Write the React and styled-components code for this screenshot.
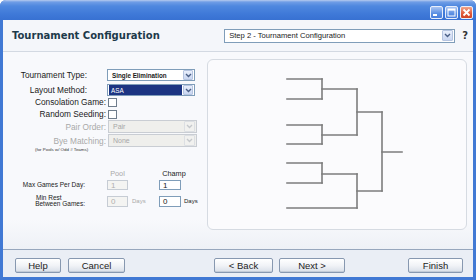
import React from "react";
import styled, { createGlobalStyle } from "styled-components";

const GlobalStyle = createGlobalStyle`
  html, body {
    margin: 0;
    padding: 0;
    background: #ffffff;
  }
  body {
    font-family: "Liberation Sans", Arial, sans-serif;
  }
`;

const Window = styled.div`
  width: 476px;
  height: 280px;
  display: flex;
  flex-direction: column;
  border-radius: 6px 6px 0 0;
  overflow: hidden;
  background: #3f76d2;
`;

const TitleBar = styled.div`
  height: 20px;
  flex: none;
  display: flex;
  justify-content: flex-end;
  align-items: flex-end;
  padding: 0 3px 1px 0;
  box-sizing: border-box;
  background: linear-gradient(
    #b7cbef 0px,
    #6f9de6 2px,
    #4f88df 6px,
    #3f79d8 14px,
    #3871d2 20px
  );
`;

const WinButtons = styled.div`
  display: flex;
  gap: 2px;
`;

const WinBtn = styled.div`
  width: 13px;
  height: 13px;
  box-sizing: border-box;
  border: 1px solid #e8eefb;
  border-radius: 2px;
  display: flex;
  align-items: center;
  justify-content: center;
  background: ${(p) =>
    p.$close
      ? "linear-gradient(#f0a58a, #e0583a 60%, #cf4426)"
      : "linear-gradient(#a9c4f2, #5b8fe3 60%, #4a7fdc)"};
`;

const Frame = styled.div`
  flex: 1;
  display: flex;
  flex-direction: column;
  border: 3px solid #4179d4;
  border-top: none;
  background: #f8f9fc;
  min-height: 0;
`;

const Header = styled.div`
  height: 31px;
  flex: none;
  display: flex;
  align-items: center;
  padding: 0 5px 0 9px;
  background: #f4f6fa;
  border-bottom: 1px solid #d3d9e2;
`;

const Title = styled.h1`
  margin: 0;
  font-family: "DejaVu Sans", Verdana, sans-serif;
  font-size: 10px;
  font-weight: bold;
  color: #1d3a4a;
  letter-spacing: 0;
`;

const Combo = styled.div`
  margin-left: ${(p) => p.$ml || 0}px;
  width: ${(p) => p.$w}px;
  height: ${(p) => p.$h}px;
  box-sizing: border-box;
  display: flex;
  align-items: center;
  padding: 0 1px 0 ${(p) => (p.$sel ? 1 : 2)}px;
  background: ${(p) => (p.$disabled ? "#efefec" : "#ffffff")};
  border: 1px solid ${(p) => (p.$disabled ? "#c9cdd3" : "#7f9db9")};
  color: ${(p) => (p.$disabled ? "#a7a7a7" : "#1a1a1a")};
  font-size: ${(p) => p.$fs || 7}px;
  font-weight: ${(p) => (p.$bold ? "bold" : "normal")};
  flex: none;
`;

const ComboText = styled.span`
  flex: 1;
  align-self: stretch;
  display: flex;
  align-items: center;
  padding-left: 2px;
  margin-right: 1px;
  white-space: nowrap;
  overflow: hidden;
  background: ${(p) => (p.$sel ? "#1c3482" : "transparent")};
  color: ${(p) => (p.$sel ? "#ffffff" : "inherit")};
`;

const ArrowBtn = styled.span`
  width: ${(p) => p.$size}px;
  height: ${(p) => p.$size}px;
  box-sizing: border-box;
  flex: none;
  display: flex;
  align-items: center;
  justify-content: center;
  border: 1px solid ${(p) => (p.$disabled ? "#dcdfe3" : "#b5c4e0")};
  border-radius: 1px;
  background: ${(p) =>
    p.$disabled
      ? "#f1f1ef"
      : "linear-gradient(#e8eefb, #c9d6f1)"};
`;

const HelpMark = styled.span`
  margin-left: 7px;
  font-family: "DejaVu Sans", Verdana, sans-serif;
  font-size: 10px;
  font-weight: bold;
  color: #333;
`;

const Content = styled.div`
  flex: 1;
  display: flex;
  padding: 7px 6px 0 0;
  min-height: 0;
  background: linear-gradient(#f8f9fc 85%, #eef1f6);
`;

const FormPanel = styled.div`
  width: 204px;
  flex: none;
  display: flex;
  flex-direction: column;
  padding-top: 10px;
  font-size: 8.3px;
  color: #1a1a1a;
`;

const Row = styled.div`
  display: flex;
  align-items: center;
  height: ${(p) => p.$h}px;
  margin-top: ${(p) => p.$mt || 0}px;
  flex: none;
`;

const Label = styled.span`
  width: ${(p) => p.$w || 103}px;
  box-sizing: border-box;
  padding-right: ${(p) => p.$pr || 0}px;
  text-align: right;
  white-space: nowrap;
  flex: none;
  color: ${(p) => (p.$muted ? "#a9a9a9" : "#1a1a1a")};
  font-size: ${(p) => p.$fs || 8.3}px;
`;

const Check = styled.span`
  width: 9px;
  height: 9px;
  margin-left: 2px;
  box-sizing: border-box;
  border: 1px solid #6f7d8c;
  background: #ffffff;
  flex: none;
`;

const Footnote = styled.div`
  padding-left: 32px;
  height: 5px;
  line-height: 5px;
  font-size: 4.4px;
  color: #333;
  white-space: nowrap;
`;

const ColHead = styled.span`
  width: ${(p) => p.$w}px;
  text-align: center;
  font-size: 7.3px;
  color: ${(p) => (p.$muted ? "#a9a9a9" : "#1a1a1a")};
  flex: none;
`;

const SmallLabel = styled.span`
  width: 82px;
  flex: none;
  text-align: right;
  font-size: 6.5px;
  line-height: 6px;
  white-space: nowrap;
`;

const TwoLine = styled.span`
  width: 82px;
  flex: none;
  display: flex;
  flex-direction: column;
  font-size: 6.5px;
  line-height: 6px;
  white-space: nowrap;
  span:first-child {
    padding-left: 33px;
  }
  span:last-child {
    text-align: right;
  }
`;

const NumBox = styled.span`
  width: ${(p) => p.$w}px;
  height: ${(p) => p.$h}px;
  margin-left: ${(p) => p.$ml || 0}px;
  box-sizing: border-box;
  flex: none;
  display: flex;
  align-items: center;
  padding-left: 3px;
  font-size: 8px;
  border: 1px solid ${(p) => (p.$disabled ? "#c6ccd4" : "#7f9db9")};
  background: ${(p) => (p.$disabled ? "#f4f4f2" : "#ffffff")};
  color: ${(p) => (p.$disabled ? "#b0b0b0" : "#1a1a1a")};
`;

const Unit = styled.span`
  width: ${(p) => p.$w}px;
  padding-left: ${(p) => p.$pl}px;
  box-sizing: border-box;
  flex: none;
  font-size: 6px;
  color: ${(p) => (p.$muted ? "#a9a9a9" : "#1a1a1a")};
`;

const BracketBox = styled.div`
  width: 260px;
  height: 171px;
  box-sizing: border-box;
  flex: none;
  border: 1px solid #d6dbe2;
  border-radius: 6px;
  background: #fbfbfd;
`;

const Footer = styled.div`
  height: 28px;
  flex: none;
  display: flex;
  align-items: flex-start;
  padding: 8px 10px 0 12px;
  box-sizing: border-box;
  background: #eaeef5;
  border-top: 1px solid #97a7bd;
`;

const ButtonGroup = styled.div`
  display: flex;
  gap: ${(p) => p.$gap}px;
  margin-left: ${(p) => p.$ml || 0}px;
`;

const Button = styled.button`
  width: ${(p) => p.$w}px;
  height: 15px;
  padding: 0;
  margin: 0;
  font-family: "Liberation Sans", Arial, sans-serif;
  font-size: 9.5px;
  color: #222;
  border: 1px solid #8798b0;
  border-radius: 2px;
  background: linear-gradient(#ffffff, #f1f3f7 50%, #d9dfe8);
  box-shadow: inset 0 -1px 0 #c4ccd8;
`;

const Spacer = styled.div`
  flex: 1;
`;

function Chevron({ color = "#4a5f86" }) {
  return (
    <svg width="7" height="5" viewBox="0 0 7 5">
      <polyline
        points="1,1 3.5,3.5 6,1"
        fill="none"
        stroke={color}
        strokeWidth="1.4"
      />
    </svg>
  );
}

function Select({ text, w, h, ml, fs, bold, sel, disabled, btn = 10 }) {
  return (
    <Combo $w={w} $h={h} $ml={ml} $fs={fs} $bold={bold} $disabled={disabled} $sel={sel}>
      <ComboText $sel={sel}>{text}</ComboText>
      <ArrowBtn $size={btn} $disabled={disabled}>
        <Chevron color={disabled ? "#c5c8cc" : "#4a5f86"} />
      </ArrowBtn>
    </Combo>
  );
}

const bracketLines = [
  [80, 20, 115, 20],
  [80, 40, 115, 40],
  [115, 20, 115, 40],
  [115, 30, 150, 30],
  [80, 66, 115, 66],
  [80, 85, 115, 85],
  [115, 66, 115, 85],
  [115, 76, 150, 76],
  [150, 30, 150, 76],
  [150, 53, 175, 53],
  [80, 104, 115, 104],
  [80, 124, 115, 124],
  [115, 104, 115, 124],
  [115, 115, 150, 115],
  [80, 149, 150, 149],
  [150, 115, 150, 149],
  [150, 132, 175, 132],
  [175, 53, 175, 132],
  [175, 93, 195, 93],
];

function Bracket() {
  return (
    <svg width="258" height="169" viewBox="1 1 258 169">
      {bracketLines.map(([x1, y1, x2, y2], i) => (
        <line
          key={i}
          x1={x1}
          y1={y1}
          x2={x2}
          y2={y2}
          stroke="#7d7d7d"
          strokeWidth="1.6"
          strokeLinecap="square"
        />
      ))}
    </svg>
  );
}

export default function App() {
  return (
    <>
      <GlobalStyle />
      <Window>
        <TitleBar>
          <WinButtons>
            <WinBtn>
              <svg width="11" height="11" viewBox="0 0 11 11">
                <rect x="2" y="7" width="4" height="2" fill="#fff" />
              </svg>
            </WinBtn>
            <WinBtn>
              <svg width="11" height="11" viewBox="0 0 11 11">
                <rect x="2" y="2" width="7" height="7" fill="none" stroke="#fff" strokeWidth="1" />
                <rect x="2" y="2" width="7" height="1.6" fill="#fff" />
              </svg>
            </WinBtn>
            <WinBtn $close>
              <svg width="11" height="11" viewBox="0 0 11 11">
                <path d="M2.5 2.5 L8.5 8.5 M8.5 2.5 L2.5 8.5" stroke="#fff" strokeWidth="1.8" />
              </svg>
            </WinBtn>
          </WinButtons>
        </TitleBar>
        <Frame>
          <Header>
            <Title>Tournament Configuration</Title>
            <Spacer />
            <Select text="Step 2 - Tournament Configuration" w={231} h={14} fs={7.6} btn={11} />
            <HelpMark>?</HelpMark>
          </Header>
          <Content>
            <FormPanel>
              <Row $h={12} $mt={0}>
                <Label $pr={19}>Tournament Type:</Label>
                <Select text="Single Elimination" w={88} h={12} ml={1} fs={6.3} bold />
              </Row>
              <Row $h={12} $mt={3}>
                <Label $pr={19}>Layout Method:</Label>
                <Select text="ASA" w={88} h={12} ml={1} fs={6.3} sel />
              </Row>
              <Row $h={10} $mt={1}>
                <Label>Consolation Game:</Label>
                <Check />
              </Row>
              <Row $h={10} $mt={2}>
                <Label>Random Seeding:</Label>
                <Check />
              </Row>
              <Row $h={13} $mt={1}>
                <Label $muted>Pair Order:</Label>
                <Select text="Pair" w={89} h={13} ml={2} fs={7} disabled btn={11} />
              </Row>
              <Row $h={13} $mt={1}>
                <Label $muted>Bye Matching:</Label>
                <Select text="None" w={89} h={13} ml={2} fs={7} disabled btn={11} />
              </Row>
              <Footnote>(for Pools w/ Odd # Teams)</Footnote>
              <Row $h={8} $mt={17}>
                <Label $w={104} />
                <ColHead $w={21} $muted>Pool</ColHead>
                <Unit $w={31} $pl={0} />
                <ColHead $w={30}>Champ</ColHead>
              </Row>
              <Row $h={10} $mt={3}>
                <SmallLabel>Max Games Per Day:</SmallLabel>
                <NumBox $w={21} $h={10} $ml={22} $disabled>1</NumBox>
                <Unit $w={31} $pl={4} />
                <NumBox $w={22} $h={10}>1</NumBox>
              </Row>
              <Row $h={16} $mt={3}>
                <TwoLine>
                  <span>Min Rest</span>
                  <span>Between Games:</span>
                </TwoLine>
                <NumBox $w={21} $h={11} $ml={22} $disabled>0</NumBox>
                <Unit $w={31} $pl={4} $muted>Days</Unit>
                <NumBox $w={22} $h={11}>0</NumBox>
                <Unit $w={30} $pl={3}>Days</Unit>
              </Row>
            </FormPanel>
            <BracketBox>
              <Bracket />
            </BracketBox>
          </Content>
          <Footer>
            <ButtonGroup $gap={7}>
              <Button $w={46}>Help</Button>
              <Button $w={57}>Cancel</Button>
            </ButtonGroup>
            <ButtonGroup $gap={6} $ml={89}>
              <Button $w={59}>&lt; Back</Button>
              <Button $w={66}>Next &gt;</Button>
            </ButtonGroup>
            <Spacer />
            <Button $w={55}>Finish</Button>
          </Footer>
        </Frame>
      </Window>
    </>
  );
}
